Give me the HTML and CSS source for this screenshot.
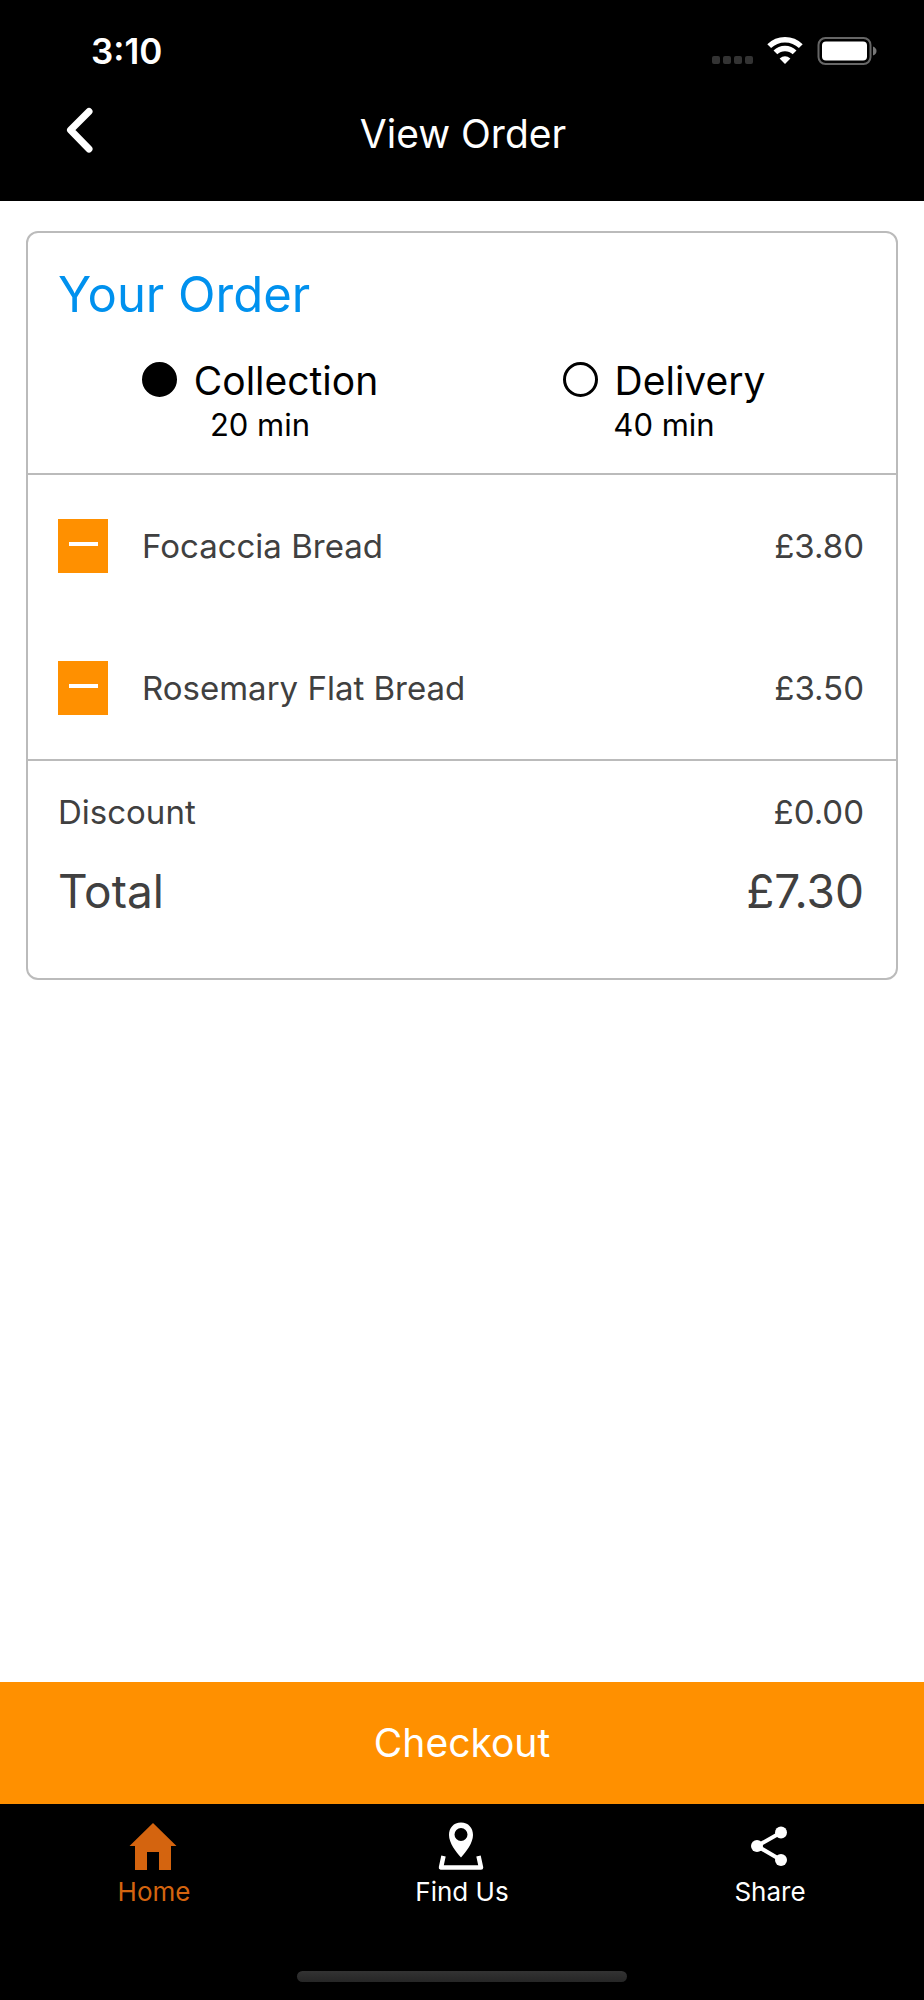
FILE: index.html
```html
<!DOCTYPE html>
<html lang="en">
<head>
  <meta charset="UTF-8">
  <meta name="viewport" content="width=device-width, initial-scale=1">
  <title>View Order</title>
  <link rel="stylesheet" href="styles.css">
</head>
<body>

<header class="header">
  <div class="status-bar">
    <span class="time">3:10</span>
    <div class="status-icons">
      <svg class="signal" width="42" height="28" viewBox="0 0 42 28" fill="#333">
        <rect x="1" y="19" width="8" height="8" rx="2"/>
        <rect x="12" y="19" width="8" height="8" rx="2"/>
        <rect x="23" y="19" width="8" height="8" rx="2"/>
        <rect x="34" y="19" width="8" height="8" rx="2"/>
      </svg>
      <svg class="wifi" width="36" height="28" viewBox="0 0 36 28" fill="none" stroke="#fff">
        <path d="M2.2 9.2 A22.5 22.5 0 0 1 33.8 9.2" stroke-width="5.4"/>
        <path d="M8.4 15.4 A13.7 13.7 0 0 1 27.6 15.4" stroke-width="5.4"/>
        <path d="M18 27 L12.6 21.5 Q18 17.2 23.4 21.5 Z" fill="#fff" stroke="none"/>
      </svg>
      <svg class="battery" width="60" height="28" viewBox="0 0 60 28">
        <rect x="1.5" y="1" width="52" height="26" rx="7" fill="none" stroke="#666" stroke-width="2"/>
        <rect x="5" y="4.5" width="45" height="19" rx="4" fill="#fff"/>
        <path d="M56 9.5 Q59.5 11 59.5 14 Q59.5 17 56 18.5 Z" fill="#777"/>
      </svg>
    </div>
  </div>
  <nav class="nav-bar">
    <button class="back" type="button" aria-label="Back">
      <svg width="48" height="48" viewBox="0 0 48 48" fill="none" stroke="#fff" stroke-width="7" stroke-linecap="round" stroke-linejoin="round">
        <path d="M33 1.5 L14.5 20 L33 39"/>
      </svg>
    </button>
    <h1>View Order</h1>
  </nav>
</header>

<main class="content">
  <form class="card" id="order">
    <section class="card-top">
      <h2>Your Order</h2>
      <div class="options">
        <label class="option">
          <span class="option-name"><input type="radio" name="method" value="collection" checked>Collection</span>
          <span class="option-time">20 min</span>
        </label>
        <label class="option">
          <span class="option-name"><input type="radio" name="method" value="delivery">Delivery</span>
          <span class="option-time">40 min</span>
        </label>
      </div>
    </section>

    <ul class="items">
      <li>
        <button class="remove" type="button" aria-label="Remove Focaccia Bread"></button>
        <span class="item-name">Focaccia Bread</span>
        <span>£3.80</span>
      </li>
      <li>
        <button class="remove" type="button" aria-label="Remove Rosemary Flat Bread"></button>
        <span class="item-name">Rosemary Flat Bread</span>
        <span>£3.50</span>
      </li>
    </ul>

    <dl class="summary">
      <div class="discount">
        <dt>Discount</dt>
        <dd>£0.00</dd>
      </div>
      <div class="total">
        <dt>Total</dt>
        <dd>£7.30</dd>
      </div>
    </dl>
  </form>
</main>

<button class="checkout" type="submit" form="order">Checkout</button>

<footer class="footer">
  <nav class="tabs">
    <a class="tab active" href="#home">
      <svg width="48" height="48" viewBox="0 0 48 48" fill="currentColor">
        <path d="M23 1 L46.5 24 H41 V48 H29 V30 H17 V48 H5 V24 H-0.5 Z"/>
      </svg>
      Home
    </a>
    <a class="tab" href="#find-us">
      <svg width="48" height="48" viewBox="0 0 48 48">
        <path fill="currentColor" fill-rule="evenodd" d="M23 0.5 C15.5 0.500 11 6 11 13 C11 21 18 30 23 35.5 C28 30 35 21 35 13 C35 6 30.5 0.5 23 0.5 Z M23 6 A6.5 6.5 0 1 1 23 19 A6.5 6.5 0 1 1 23 6 Z"/>
        <path fill="none" stroke="currentColor" stroke-width="4.5" stroke-linejoin="round" d="M5.5 34 L3 45.500 H43 L40.500 34"/>
      </svg>
      Find Us
    </a>
    <a class="tab" href="#share">
      <svg width="48" height="48" viewBox="0 0 48 48" fill="currentColor">
        <path fill="none" stroke="currentColor" stroke-width="4" d="M35 10.5 L11 24 L35 38"/>
        <circle cx="11" cy="24" r="6"/>
        <circle cx="35" cy="10.5" r="6"/>
        <circle cx="35" cy="38" r="6"/>
      </svg>
      Share
    </a>
  </nav>
  <div class="home-indicator"></div>
</footer>

</body>
</html>
```
FILE: styles.css
```css
* { box-sizing: border-box; }
body { margin: 0; min-height: 100vh; display: flex; flex-direction: column; background: #fff; color: #000; font-family: Inter, "Liberation Sans", sans-serif; font-size: 33px; line-height: 40px; }
h1, h2, ul, dl, dd { margin: 0; padding: 0; font-weight: 400; }
button { padding: 0; border: none; font: inherit; cursor: pointer; }
svg { display: block; flex: none; overflow: visible; }

/* header */
.header { padding: 31px 47px 43px 56px; background: #000; color: #fff; }
.status-bar { display: flex; justify-content: space-between; align-items: center; }
.time { padding-left: 35px; font-size: 35px; font-weight: 600; }
.status-icons { display: flex; gap: 14px; }
.nav-bar { display: grid; grid-template-columns: 48px 1fr 55px; margin-top: 39px; }
.nav-bar h1 { font-size: 39px; line-height: 48px; text-align: center; }
.back { background: none; }

/* order card */
.content { flex: 1; padding: 30px 26px; }
.card { border: 2px solid #bbb; border-radius: 12px; color: #404040; }
.card-top { padding: 30px 30px 28px; color: #000; }
.card-top h2 { color: #0091ee; font-size: 49px; line-height: 64px; }
.options { display: grid; grid-template-columns: 1fr 1fr; margin-top: 30px; }
.option { display: flex; flex-direction: column; align-items: center; cursor: pointer; }
.option-name { display: flex; gap: 17px; font-size: 39px; line-height: 48px; }
.option-time { font-size: 31px; }
.option input { appearance: none; width: 35px; height: 35px; margin: 5px 0 0; border: 3px solid #000; border-radius: 50%; }
.option input:checked { background: #000; }

.items { border: solid #bbb; border-width: 2px 0; list-style: none; }
.items li { display: flex; align-items: center; gap: 34px; height: 142px; padding: 0 32px 0 30px; }
.item-name { flex: 1; }
.remove { display: flex; justify-content: center; width: 50px; height: 54px; padding-top: 23px; background: #ff9000; }
.remove::before { content: ""; width: 29px; height: 4px; background: #fff; }

.summary { padding: 31px 32px 59px 30px; }
.summary div { display: flex; justify-content: space-between; }
.total { margin-top: 31px; font-size: 46px; line-height: 56px; }

/* bottom */
.checkout { height: 122px; background: #ff9000; color: #fff; font-size: 39px; }
.footer { padding: 18px 0; background: #000; }
.tabs { display: grid; grid-template-columns: repeat(3, 1fr); }
.tab { display: flex; flex-direction: column; align-items: center; gap: 6px; color: #fff; font-size: 26px; line-height: 32px; text-decoration: none; }
.tab.active { color: #d4640f; }
.home-indicator { width: 330px; height: 11px; margin: 63px auto 0; border-radius: 6px; background: linear-gradient(#333, #262626); }
```
